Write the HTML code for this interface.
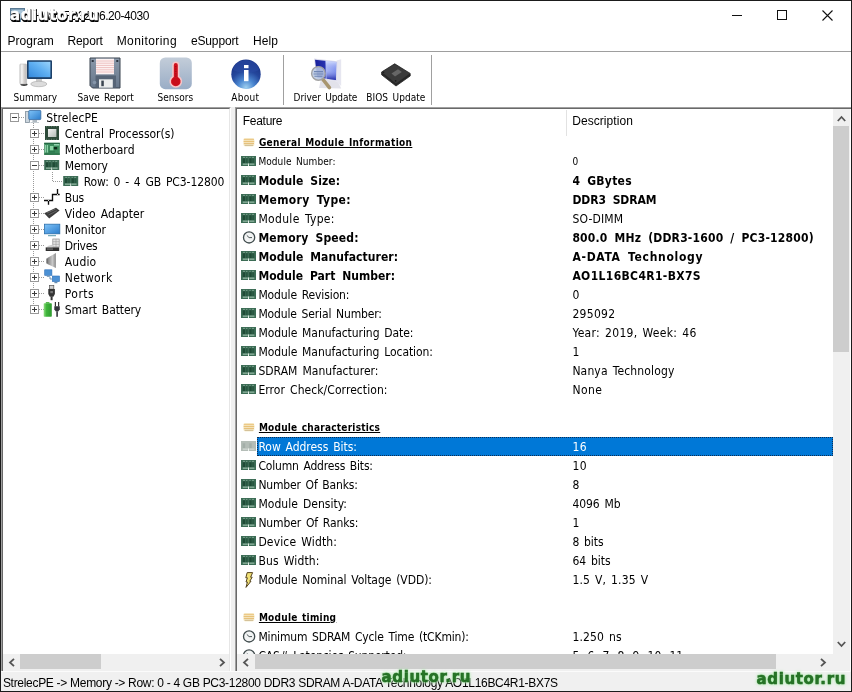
<!DOCTYPE html>
<html lang="en"><head><meta charset="utf-8"><title>HWiNFO32 v6.20-4030</title>
<style>
html,body{margin:0;padding:0;background:#fff;}
body{width:852px;height:692px;position:relative;overflow:hidden;font-family:"Liberation Sans","DejaVu Sans",sans-serif;}
#win{position:absolute;left:0;top:0;width:850px;height:690px;border:1px solid #1b1b1b;background:#fff;}
.abs{position:absolute}
.t{position:absolute;white-space:nowrap;line-height:20px;}
.ic{position:absolute;overflow:visible}
#menuline{left:1px;top:51px;width:850px;height:1px;background:#9e9e9e}
#tsep1,#tsep2{top:55px;width:1px;height:50px;background:#a0a0a0}
#tsep1{left:283px}#tsep2{left:431px}
#lp{left:1px;top:107px;width:230px;height:564px;background:#fff;overflow:hidden}
#lp:before{content:"";position:absolute;left:0;top:0;right:0;bottom:0;border-left:1px solid #a0a0a0;border-top:1px solid #a0a0a0;border-right:1px solid #fff;z-index:3}
#lp:after{content:"";position:absolute;left:1px;top:1px;right:1px;bottom:0;border-left:1px solid #696969;border-top:1px solid #696969;border-right:1px solid #e6e6e6;z-index:3}
#split{left:231px;top:107px;width:4px;height:564px;background:#f0f0f0}
#rp{left:235px;top:107px;width:616px;height:564px;background:#fff;overflow:hidden}
#rp:before{content:"";position:absolute;left:0;top:0;right:0;bottom:0;border-top:1px solid #a0a0a0;border-left:1px solid #a0a0a0;z-index:3}
#rp:after{content:"";position:absolute;left:1px;top:1px;right:0;bottom:0;border-left:1px solid #696969;border-top:1px solid #696969;z-index:3}
#clipL{left:0;top:0;width:230px;height:654px;overflow:hidden}
#clipR{left:0;top:0;width:833px;height:654px;overflow:hidden}
.sb{background:#f0f0f0}
.th{background:#cdcdcd}
#status{left:1px;top:671px;width:850px;height:20px;background:#f0f0f0;border-top:1px solid #fbfbfb;box-sizing:border-box}
#sel{left:257px;top:437px;width:576px;height:19px;background:#0078d7;box-sizing:border-box;border:1px dotted #0d2f55}
.wm{position:absolute;white-space:nowrap;font:bold 15px/20px "DejaVu Sans","Liberation Sans",sans-serif;letter-spacing:0.62px}
.wmg{color:rgba(22,98,22,0.86);-webkit-text-stroke:0.5px rgba(22,98,22,0.86);text-shadow:0 0 2px rgba(130,220,130,0.9),0 0 3px rgba(170,236,170,0.9),0 0 4px rgba(210,248,210,0.9)}
.wmw{color:#fff;-webkit-text-stroke:0.4px #fff;text-shadow:1px 1px 0 #000,1px 2px 0 #000,0 2px 0 #111,0 1px 0 #000}
#root{position:absolute;left:0;top:0;width:852px;height:692px;overflow:hidden;will-change:transform;background:#fff}
</style></head><body><div id="root">
<svg width="0" height="0" style="position:absolute">
<defs>
<symbol id="i-ram" viewBox="0 0 16 19" overflow="visible"><rect x="0" y="4" width="15" height="10" fill="#3c6c55"/><rect x="1.6" y="6.3" width="2.6" height="4.8" fill="#1f4b36"/><rect x="4.9" y="6.3" width="1.8" height="4.8" fill="#285741"/><rect x="8.3" y="6.3" width="2.4" height="4.8" fill="#1f4b36"/><rect x="11.2" y="6.3" width="2" height="4.8" fill="#285741"/><path d="M2 5.4H4M5 5.4H6.4M8.4 5.4H9.6M11 5.4H13" stroke="#86ad98" stroke-width="0.8"/><rect x="1.8" y="11.6" width="5" height="1.1" fill="#9dc0ad"/><rect x="8.4" y="11.6" width="5" height="1.1" fill="#9dc0ad"/><rect x="7" y="11.4" width="1" height="2.6" fill="#e6efe9"/></symbol>
<symbol id="i-ramsel" viewBox="0 0 16 19" overflow="visible"><rect x="0" y="4" width="15" height="10" fill="#b4bdb7"/><rect x="1.6" y="6.3" width="2.6" height="4.8" fill="#a3aea8"/><rect x="8.3" y="6.3" width="2.4" height="4.8" fill="#a3aea8"/><rect x="1.8" y="11.6" width="5" height="1.1" fill="#d4dcd7"/><rect x="8.4" y="11.6" width="5" height="1.1" fill="#d4dcd7"/><rect x="7" y="11.4" width="1" height="2.6" fill="#eef2ef"/></symbol>
<symbol id="i-hd" viewBox="0 0 16 19" overflow="visible"><rect x="2.4" y="0" width="11" height="8.4" rx="2" fill="#f8efd2"/><rect x="2.8" y="0.8" width="10.2" height="1.3" fill="#ecc988"/><rect x="2.6" y="2.8" width="10.6" height="1.4" fill="#e8c27a"/><rect x="2.8" y="4.9" width="10.2" height="1.3" fill="#e6c17c"/><rect x="3.6" y="6.8" width="8.6" height="1" fill="#cdb78c"/></symbol>
<symbol id="i-clk" viewBox="0 0 16 19" overflow="visible"><circle cx="8.1" cy="9.4" r="5.6" fill="#f2f4f4" stroke="#3f4a4c" stroke-width="1.3"/><path d="M8.1 9.6 L5.8 7.4 M8.1 9.6 L11 9.6" stroke="#4a5456" stroke-width="1" fill="none"/></symbol>
<symbol id="i-ltn" viewBox="0 0 16 19" overflow="visible"><path d="M6.2 2.6 L11.6 2.6 L9.6 7.2 L11.2 7.2 L8.8 11.2 L10 11.2 L5 17.4 L6.4 12 L5 12 L6.4 7.8 L4.8 7.8 Z" fill="#f1e176" stroke="#54431f" stroke-width="1" stroke-linejoin="round"/></symbol>
</defs></svg>
<div id="win">
</div>
<!-- title bar -->
<svg class="abs" style="left:10px;top:8px" width="15" height="15" viewBox="0 0 15 15"><rect x="0.5" y="0.5" width="14" height="11" fill="#7fa0b8" stroke="#5a7a94"/><rect x="2" y="2" width="11" height="8" fill="#a8c4d8"/><rect x="4" y="12" width="7" height="2" fill="#6a8aa4"/></svg>
<!-- window controls -->
<svg class="abs" style="left:725px;top:1px" width="126" height="29" viewBox="0 0 126 29" shape-rendering="crispEdges"><rect x="7" y="14" width="10" height="1" fill="#111"/><rect x="52.5" y="9.5" width="9" height="9" fill="none" stroke="#111" stroke-width="1"/><path d="M97.5 9.5 L107.5 19.5 M107.5 9.5 L97.5 19.5" stroke="#111" stroke-width="1.1" shape-rendering="geometricPrecision"/></svg>
<div class="abs" id="menuline"></div>
<div class="abs" id="tsep1"></div><div class="abs" id="tsep2"></div>
<svg class="abs" style="left:0;top:52px" width="440" height="44" viewBox="0 52 440 44">
<defs>
<linearGradient id="gScr" x1="0" y1="1" x2="1" y2="0"><stop offset="0" stop-color="#3388dc"/><stop offset="0.55" stop-color="#60b0f2"/><stop offset="1" stop-color="#9ad4fc"/></linearGradient>
<linearGradient id="gTow" x1="0" y1="0" x2="1" y2="0"><stop offset="0" stop-color="#cfcfcf"/><stop offset="0.3" stop-color="#f6f6f6"/><stop offset="0.6" stop-color="#d6d2d0"/><stop offset="1" stop-color="#b9b9b9"/></linearGradient>
<linearGradient id="gSen" x1="0" y1="0" x2="0" y2="1"><stop offset="0" stop-color="#c3cdd9"/><stop offset="1" stop-color="#9aadc6"/></linearGradient>
<radialGradient id="gAb" cx="0.5" cy="0.95" r="0.8"><stop offset="0" stop-color="#9fd0f0"/><stop offset="0.35" stop-color="#4a86d0"/><stop offset="0.7" stop-color="#24479c"/><stop offset="1" stop-color="#1c378a"/></radialGradient>
<linearGradient id="gFl" x1="0" y1="0" x2="0" y2="1"><stop offset="0" stop-color="#8a98aa"/><stop offset="1" stop-color="#66768a"/></linearGradient>
<linearGradient id="gDs" x1="0" y1="0" x2="1" y2="0"><stop offset="0" stop-color="#18209a"/><stop offset="0.47" stop-color="#2832b0"/><stop offset="0.52" stop-color="#aebcf6"/><stop offset="1" stop-color="#7f92ee"/></linearGradient>
<linearGradient id="gDs2" x1="0" y1="0" x2="0" y2="1"><stop offset="0" stop-color="#dfe8ff" stop-opacity="0.85"/><stop offset="0.5" stop-color="#8a98f0" stop-opacity="0.15"/><stop offset="1" stop-color="#1a22a0" stop-opacity="0.95"/></linearGradient>
</defs>
<!-- Summary -->
<g>
<ellipse cx="24" cy="84.6" rx="3.6" ry="1.3" fill="#3a3a3a"/>
<rect x="19.8" y="64" width="6.8" height="20" rx="0.8" fill="url(#gTow)" stroke="#b4b4b4" stroke-width="0.5"/>
<rect x="36" y="78.5" width="6" height="4" fill="#c9c9c9"/>
<ellipse cx="38.8" cy="84" rx="8" ry="2.7" fill="#dcdcdc" stroke="#b0b0b0" stroke-width="0.7"/>
<rect x="27" y="60.3" width="25" height="18.8" rx="1" fill="#1d4068"/>
<rect x="28.6" y="61.8" width="21.8" height="15.4" fill="url(#gScr)"/>
</g>
<!-- Save Report -->
<g>
<path d="M90 58 H120 V88 H92.5 L90 85.5 Z" fill="url(#gFl)" stroke="#39424e" stroke-width="1"/>
<rect x="96" y="58.7" width="18" height="15.6" fill="#fdf3f3"/>
<path d="M96 61H114M96 63.2H114M96 65.4H114M96 67.6H114M96 69.8H114M96 72H114" stroke="#eec2c2" stroke-width="1"/>
<rect x="95.5" y="75.5" width="20.5" height="12" fill="#566476"/>
<rect x="99" y="79.3" width="13.8" height="8.4" fill="#eceeee"/>
<rect x="101.3" y="80.6" width="2.5" height="5.6" fill="#3c4652"/>
<rect x="91.7" y="60" width="2" height="2" fill="#2c3440"/><rect x="116.3" y="60" width="2" height="2" fill="#2c3440"/>
<circle cx="94.5" cy="82.5" r="1.8" fill="#8696aa"/>
</g>
<!-- Sensors -->
<g>
<rect x="159.8" y="57.4" width="32" height="31.8" rx="5.5" fill="url(#gSen)"/>
<path d="M173 65 a2.8 2.8 0 0 1 5.6 0 V76.6 a5.6 5.6 0 1 1 -5.6 0 Z" fill="#d0121f" stroke="#f6c6c8" stroke-width="1.6"/>
<path d="M175.8 66 V78" stroke="#a00a14" stroke-width="1.2" stroke-dasharray="1.2 1.2"/>
<circle cx="175.8" cy="81.4" r="3.6" fill="#c80d1a"/>
</g>
<!-- About -->
<g>
<circle cx="246" cy="74.2" r="14.7" fill="url(#gAb)"/>
<path d="M232.6 70 a14 14 0 0 1 26.8 0 q-13 6 -26.8 0z" fill="#2b4ca6" opacity="0.55"/>
<rect x="244" y="65" width="4.5" height="3.2" fill="#fff"/><rect x="244" y="70" width="4.5" height="11.2" fill="#fff"/>
</g>
<!-- Driver Update -->
<g>
<path d="M321 79 L338 81.5 L341.2 88.5 L319 88 Z" fill="#e2e2ea"/>
<path d="M336.6 60.4 L341.2 59.2 L341.2 86 L336.2 81.5 Z" fill="#e6e6f0"/>
<path d="M314 58.6 L337.4 61.2 L336.8 81.2 L316.6 78.4 Z" fill="#dcdcec"/>
<path d="M315 59.8 L336.4 62 L335.9 80 L317.4 77.4 Z" fill="url(#gDs)"/>
<path d="M325.6 60.9 L336.4 62 L335.9 80 L326.6 78.7 Z" fill="url(#gDs2)"/>
<path d="M323 79.5 L329.4 87.6" stroke="#a89670" stroke-width="3.6" stroke-linecap="round"/>
<circle cx="318.4" cy="73.4" r="6.8" fill="#b9c8e2" fill-opacity="0.88" stroke="#a2a2a2" stroke-width="1.4"/>
<path d="M314 71.6 H323 M313.6 74 H323.2 M314.4 76.2 H322.4" stroke="#6f86b4" stroke-width="1.1"/>
</g>
<!-- BIOS Update -->
<g>
<path d="M381.6 72 L394.7 63.8 L410.2 73.4 L410.2 76 L396 86 L381.6 74.8 Z" fill="#262626" stroke="#262626" stroke-width="0.8" stroke-linejoin="round"/>
<path d="M381.8 72.1 L394.7 64.2 L409.8 73.5 L396 83.4 Z" fill="#3a3a3a"/>
<path d="M391.5 73.5 L398 69.3 L401.8 72 L395 76.4 Z" fill="#666"/>
<circle cx="383.6" cy="72.3" r="0.8" fill="#1a1a1a"/><circle cx="395.6" cy="80.8" r="0.9" fill="#1a1a1a"/>
</g>
</svg>

<!-- left panel -->
<div class="abs" id="lp"><div class="abs" id="clipL" style="left:-1px;top:-107px;width:229px;height:654px">
<svg class="abs" style="left:0;top:107px" width="232" height="220" viewBox="0 107 232 220">
<defs>
<linearGradient id="tScr" x1="1" y1="1" x2="0" y2="0"><stop offset="0" stop-color="#2b7ccc"/><stop offset="1" stop-color="#80c4f8"/></linearGradient>
<linearGradient id="tCpu" x1="0" y1="0" x2="1" y2="1"><stop offset="0" stop-color="#f4f4f4"/><stop offset="1" stop-color="#b4bcb6"/></linearGradient>
<linearGradient id="tSpk" x1="0" y1="0" x2="1" y2="0"><stop offset="0" stop-color="#7c7c7c"/><stop offset="0.6" stop-color="#c9c9c9"/><stop offset="1" stop-color="#8a8a8a"/></linearGradient>
<linearGradient id="tBat" x1="0" y1="0" x2="1" y2="0"><stop offset="0" stop-color="#8ddc7e"/><stop offset="0.35" stop-color="#3fb53b"/><stop offset="1" stop-color="#2f9a2f"/></linearGradient>
<g id="bx"><rect x="-4" y="-4" width="8" height="8" fill="#fff" stroke="#989898" stroke-width="1"/></g>
</defs>
<g shape-rendering="crispEdges" stroke="#9a9a9a" stroke-width="1" stroke-dasharray="1 1" fill="none">
<path d="M19 117.5 H25"/>
<path d="M33.5 123 V309"/>
<path d="M39 133.5 H44 M39 149.5 H44 M39 165.5 H44 M39 197.5 H44 M39 213.5 H44 M39 229.5 H44 M39 245.5 H44 M39 261.5 H44 M39 277.5 H44 M39 293.5 H44 M39 309.5 H44"/>
<path d="M52.5 172 V181 M53 181.5 H63"/>
</g>
<g shape-rendering="crispEdges">
<use href="#bx" x="14.5" y="117.5"/><path d="M12 117.5 H17" stroke="#3c3c3c" stroke-width="1"/>
<g id="pl"><use href="#bx" x="34.5" y="133.5"/><path d="M32 133.5 H37 M34.5 131 V136" stroke="#3c3c3c" stroke-width="1"/></g>
<use href="#pl" y="16"/>
<use href="#bx" x="34.5" y="165.5"/><path d="M32 165.5 H37" stroke="#3c3c3c" stroke-width="1"/>
<use href="#pl" y="64"/><use href="#pl" y="80"/><use href="#pl" y="96"/><use href="#pl" y="112"/><use href="#pl" y="128"/><use href="#pl" y="144"/><use href="#pl" y="160"/><use href="#pl" y="176"/>
</g>
<!-- root computer -->
<rect x="25.4" y="111.6" width="4.2" height="10.8" fill="#ccd6de" stroke="#7f8e9a" stroke-width="0.8"/>
<rect x="28.8" y="110.4" width="12" height="9.2" rx="0.8" fill="url(#tScr)" stroke="#3b6fa6" stroke-width="0.9"/>
<rect x="32.5" y="120" width="4.5" height="2.2" fill="#aeb8c0"/><rect x="30.5" y="122" width="8.5" height="1" fill="#c4ccd2"/>
<!-- cpu -->
<rect x="45" y="126" width="14" height="14" fill="#2d4a39"/>
<path d="M46.5 126.3V127.2M49 126.3V127.2M51.5 126.3V127.2M54 126.3V127.2M56.5 126.3V127.2M46.5 138.8V139.7M49 138.8V139.7M51.5 138.8V139.7M54 138.8V139.7M56.5 138.8V139.7" stroke="#7e9a88" stroke-width="0.8"/>
<rect x="48" y="129" width="8.4" height="8" fill="url(#tCpu)"/>
<!-- motherboard -->
<rect x="44.2" y="142.8" width="15.6" height="12" fill="#3b8c5d"/><rect x="44.2" y="142.8" width="15.6" height="1.2" fill="#256844"/><rect x="44.2" y="153.4" width="15.6" height="1.4" fill="#2a7048"/>
<rect x="45.2" y="145" width="1" height="7.5" fill="#a4e0bc"/><rect x="47" y="145" width="1" height="7.5" fill="#8fd4aa"/>
<rect x="50" y="146" width="3.4" height="4.4" fill="#8ed6a8"/><rect x="53.8" y="147" width="3.4" height="2.4" fill="#0c2c1a"/>
<rect x="54" y="144.2" width="5" height="1.2" fill="#a8e4c4"/><rect x="49" y="150.8" width="6" height="1.8" fill="#2c7a4e"/>
<!-- memory icons -->
<g id="tram"><rect x="44.2" y="160" width="15" height="10" fill="#3c6c55"/><rect x="45.8" y="162.3" width="2.6" height="4.8" fill="#1f4b36"/><rect x="49.1" y="162.3" width="1.8" height="4.8" fill="#285741"/><rect x="52.5" y="162.3" width="2.4" height="4.8" fill="#1f4b36"/><rect x="55.4" y="162.3" width="2" height="4.8" fill="#285741"/><path d="M46.2 161.4H48.2M49.2 161.4H50.6M52.6 161.4H53.8M55.2 161.4H57.2" stroke="#86ad98" stroke-width="0.8"/><rect x="46" y="167.6" width="5" height="1.1" fill="#9dc0ad"/><rect x="52.6" y="167.6" width="5" height="1.1" fill="#9dc0ad"/><rect x="51.2" y="167.4" width="1" height="2.6" fill="#e6efe9"/></g>
<use href="#tram" x="19" y="16"/>
<!-- bus -->
<path d="M44 200.5 H52.5 V194.5 H59.7 M48.5 200.5 V204.8 M57.5 189 V194.5" fill="none" stroke="#0c0c0c" stroke-width="1.35"/><rect x="48" y="200" width="1" height="1" fill="#ddd"/><rect x="57" y="194" width="1" height="1" fill="#ddd"/>
<!-- video adapter -->
<path d="M44.2 213.2 L56 207.8 L59.6 210.6 L49.2 218.6 Z" fill="#3b3b3b"/>
<path d="M47 213 L55.5 209.2 M48.5 215 L57 210.6" stroke="#6d6d6d" stroke-width="0.8"/>
<!-- monitor -->
<rect x="44.4" y="224.2" width="15.4" height="9.6" fill="url(#tScr)" stroke="#2b6eaa" stroke-width="0.8"/>
<rect x="48" y="235.2" width="8" height="1" fill="#5a98a8"/>
<!-- drives -->
<rect x="52.8" y="239" width="6.4" height="8" fill="#e4e4e4" stroke="#8e8e8e" stroke-width="0.7"/><path d="M52.8 241.7H59.2M52.8 244.3H59.2M56 239V247" stroke="#9a9a9a" stroke-width="0.6"/>
<path d="M47.5 246 L52.8 244.5 V247 H47.5Z" fill="#cfcfcf"/>
<rect x="45.7" y="247.4" width="13.5" height="3.6" fill="#2f2f2f"/><rect x="47" y="248.6" width="6" height="0.9" fill="#8a8a8a"/>
<!-- audio -->
<path d="M47.3 258 L55.9 253 V268 L47.3 264 Z" fill="url(#tSpk)"/><rect x="46.3" y="258.5" width="1.6" height="5" fill="#6e6e6e"/>
<!-- network -->
<rect x="44.7" y="269.8" width="7.2" height="5.6" fill="#4b90d4" stroke="#2f70b8" stroke-width="0.6"/><rect x="46.8" y="275.6" width="3" height="1.2" fill="#6a8fb0"/>
<rect x="52.3" y="276" width="7.2" height="5.6" fill="#4b90d4" stroke="#2f70b8" stroke-width="0.6"/><rect x="54.4" y="281.8" width="3" height="1.4" fill="#6a8fb0"/>
<path d="M50 276.8 V279 H52.3" fill="none" stroke="#5f86ae" stroke-width="0.9"/>
<!-- ports -->
<rect x="49.4" y="285.4" width="4.4" height="3.8" fill="#d0d0d0" stroke="#555" stroke-width="0.7"/>
<path d="M48.3 289 H54.9 V294 L53.4 296.8 H49.8 L48.3 294 Z" fill="#333"/><rect x="50.6" y="296.6" width="2" height="3.6" fill="#333"/><rect x="50.3" y="291" width="2.6" height="2.2" fill="#777"/>
<!-- smart battery -->
<rect x="45.8" y="302" width="3.6" height="1.4" fill="#59b84f"/><rect x="43.7" y="303.2" width="8.1" height="13.6" rx="0.8" fill="url(#tBat)"/>
<path d="M55.4 302 V306.4 M58.6 302 V306.4" stroke="#333" stroke-width="1.2"/><path d="M54.3 306.2 H59.8 V309.6 L58.2 311.6 H55.9 L54.3 309.6 Z" fill="#34343c"/><rect x="56.3" y="311.4" width="1.6" height="5.4" fill="#34343c"/>
</svg>

<span class="t" style="left:228.9px;top:171.65px;font:12px/20px 'DejaVu Sans Condensed','Liberation Sans',sans-serif;color:#000;word-spacing:1.5px;">DDR3 SDRAM A-DATA Technology AO1L16BC4R1-BX7S</span>
<span class="t" style="left:83.7px;top:171.65px;font:12px/20px 'DejaVu Sans Condensed','Liberation Sans',sans-serif;color:#000;word-spacing:1.5px;letter-spacing:-0.085px;">Row: 0 - 4 GB PC3-12800</span>
</div>
<div class="abs sb" style="left:2px;top:547px;width:228px;height:17px"></div>
<div class="abs th" style="left:19px;top:547px;width:81px;height:15px"></div>
<svg class="abs" style="left:7px;top:551px" width="8" height="9" viewBox="0 0 8 9"><path d="M6 0.8 L2 4.5 L6 8.2" fill="none" stroke="#555" stroke-width="1.8"/></svg>
<svg class="abs" style="left:217px;top:551px" width="8" height="9" viewBox="0 0 8 9"><path d="M2 0.8 L6 4.5 L2 8.2" fill="none" stroke="#555" stroke-width="1.8"/></svg>
</div>
<div class="abs" id="split"></div>
<!-- right panel -->
<div class="abs" id="rp"><div class="abs" id="clipR" style="left:-235px;top:-107px;width:833px;height:654px">
<div class="abs" style="left:566px;top:110px;width:1px;height:26px;background:#e2e2e2"></div>
<div class="abs" id="sel"></div>
<svg class="ic" style="left:241px;top:138px" width="16" height="19"><use href="#i-hd"/></svg>
<svg class="ic" style="left:241px;top:152px" width="16" height="19"><use href="#i-ram"/></svg>
<svg class="ic" style="left:241px;top:171px" width="16" height="19"><use href="#i-ram"/></svg>
<svg class="ic" style="left:241px;top:190px" width="16" height="19"><use href="#i-ram"/></svg>
<svg class="ic" style="left:241px;top:209px" width="16" height="19"><use href="#i-ram"/></svg>
<svg class="ic" style="left:241px;top:228px" width="16" height="19"><use href="#i-clk"/></svg>
<svg class="ic" style="left:241px;top:247px" width="16" height="19"><use href="#i-ram"/></svg>
<svg class="ic" style="left:241px;top:266px" width="16" height="19"><use href="#i-ram"/></svg>
<svg class="ic" style="left:241px;top:285px" width="16" height="19"><use href="#i-ram"/></svg>
<svg class="ic" style="left:241px;top:304px" width="16" height="19"><use href="#i-ram"/></svg>
<svg class="ic" style="left:241px;top:323px" width="16" height="19"><use href="#i-ram"/></svg>
<svg class="ic" style="left:241px;top:342px" width="16" height="19"><use href="#i-ram"/></svg>
<svg class="ic" style="left:241px;top:361px" width="16" height="19"><use href="#i-ram"/></svg>
<svg class="ic" style="left:241px;top:380px" width="16" height="19"><use href="#i-ram"/></svg>
<svg class="ic" style="left:241px;top:423px" width="16" height="19"><use href="#i-hd"/></svg>
<svg class="ic" style="left:241px;top:437px" width="16" height="19"><use href="#i-ramsel"/></svg>
<svg class="ic" style="left:241px;top:456px" width="16" height="19"><use href="#i-ram"/></svg>
<svg class="ic" style="left:241px;top:475px" width="16" height="19"><use href="#i-ram"/></svg>
<svg class="ic" style="left:241px;top:494px" width="16" height="19"><use href="#i-ram"/></svg>
<svg class="ic" style="left:241px;top:513px" width="16" height="19"><use href="#i-ram"/></svg>
<svg class="ic" style="left:241px;top:532px" width="16" height="19"><use href="#i-ram"/></svg>
<svg class="ic" style="left:241px;top:551px" width="16" height="19"><use href="#i-ram"/></svg>
<svg class="ic" style="left:241px;top:570px" width="16" height="19"><use href="#i-ltn"/></svg>
<svg class="ic" style="left:241px;top:613px" width="16" height="19"><use href="#i-hd"/></svg>
<svg class="ic" style="left:241px;top:627px" width="16" height="19"><use href="#i-clk"/></svg>
<svg class="ic" style="left:241px;top:646px" width="16" height="19"><use href="#i-clk"/></svg>
<span class="t" style="left:258.9px;top:132.84px;font:bold 10px/20px 'DejaVu Sans Condensed','Liberation Sans',sans-serif;color:#000;word-spacing:1px;letter-spacing:0.335px;text-decoration:underline;">General Module Information</span>
<span class="t" style="left:258.4px;top:151.84px;font:10px/20px 'DejaVu Sans Condensed','Liberation Sans',sans-serif;color:#000;word-spacing:1.5px;letter-spacing:0.079px;">Module Number:</span>
<span class="t" style="left:572.4px;top:151.84px;font:10px/20px 'DejaVu Sans Condensed','Liberation Sans',sans-serif;color:#000;word-spacing:1.5px;letter-spacing:0.000px;">0</span>
<span class="t" style="left:258.4px;top:171.15px;font:bold 12px/20px 'DejaVu Sans Condensed','Liberation Sans',sans-serif;color:#000;word-spacing:3px;letter-spacing:0.076px;">Module Size:</span>
<span class="t" style="left:572.4px;top:171.15px;font:bold 12px/20px 'DejaVu Sans Condensed','Liberation Sans',sans-serif;color:#000;word-spacing:3px;letter-spacing:0.270px;">4 GBytes</span>
<span class="t" style="left:258.4px;top:190.15px;font:bold 12px/20px 'DejaVu Sans Condensed','Liberation Sans',sans-serif;color:#000;word-spacing:3px;letter-spacing:0.353px;">Memory Type:</span>
<span class="t" style="left:572.4px;top:190.15px;font:bold 12px/20px 'DejaVu Sans Condensed','Liberation Sans',sans-serif;color:#000;word-spacing:3px;letter-spacing:-0.052px;">DDR3 SDRAM</span>
<span class="t" style="left:258.4px;top:209.15px;font:12px/20px 'DejaVu Sans Condensed','Liberation Sans',sans-serif;color:#000;word-spacing:1.5px;letter-spacing:0.332px;">Module Type:</span>
<span class="t" style="left:572.4px;top:209.15px;font:12px/20px 'DejaVu Sans Condensed','Liberation Sans',sans-serif;color:#000;word-spacing:1.5px;letter-spacing:0.164px;">SO-DIMM</span>
<span class="t" style="left:258.4px;top:228.15px;font:bold 12px/20px 'DejaVu Sans Condensed','Liberation Sans',sans-serif;color:#000;word-spacing:3px;letter-spacing:0.170px;">Memory Speed:</span>
<span class="t" style="left:572.4px;top:228.15px;font:bold 12px/20px 'DejaVu Sans Condensed','Liberation Sans',sans-serif;color:#000;word-spacing:3px;letter-spacing:0.203px;">800.0 MHz (DDR3-1600 / PC3-12800)</span>
<span class="t" style="left:258.4px;top:247.15px;font:bold 12px/20px 'DejaVu Sans Condensed','Liberation Sans',sans-serif;color:#000;word-spacing:3px;letter-spacing:0.069px;">Module Manufacturer:</span>
<span class="t" style="left:572.4px;top:247.15px;font:bold 12px/20px 'DejaVu Sans Condensed','Liberation Sans',sans-serif;color:#000;word-spacing:3px;letter-spacing:0.703px;">A-DATA Technology</span>
<span class="t" style="left:258.4px;top:266.15px;font:bold 12px/20px 'DejaVu Sans Condensed','Liberation Sans',sans-serif;color:#000;word-spacing:3px;letter-spacing:0.025px;">Module Part Number:</span>
<span class="t" style="left:572.4px;top:266.15px;font:bold 12px/20px 'DejaVu Sans Condensed','Liberation Sans',sans-serif;color:#000;word-spacing:3px;letter-spacing:0.362px;">AO1L16BC4R1-BX7S</span>
<span class="t" style="left:258.4px;top:285.15px;font:12px/20px 'DejaVu Sans Condensed','Liberation Sans',sans-serif;color:#000;word-spacing:1.5px;letter-spacing:-0.120px;">Module Revision:</span>
<span class="t" style="left:572.4px;top:285.15px;font:12px/20px 'DejaVu Sans Condensed','Liberation Sans',sans-serif;color:#000;word-spacing:1.5px;letter-spacing:0.000px;">0</span>
<span class="t" style="left:258.4px;top:304.15px;font:12px/20px 'DejaVu Sans Condensed','Liberation Sans',sans-serif;color:#000;word-spacing:1.5px;letter-spacing:-0.143px;">Module Serial Number:</span>
<span class="t" style="left:572.4px;top:304.15px;font:12px/20px 'DejaVu Sans Condensed','Liberation Sans',sans-serif;color:#000;word-spacing:1.5px;letter-spacing:0.299px;">295092</span>
<span class="t" style="left:258.4px;top:323.15px;font:12px/20px 'DejaVu Sans Condensed','Liberation Sans',sans-serif;color:#000;word-spacing:1.5px;letter-spacing:-0.066px;">Module Manufacturing Date:</span>
<span class="t" style="left:572.4px;top:323.15px;font:12px/20px 'DejaVu Sans Condensed','Liberation Sans',sans-serif;color:#000;word-spacing:1.5px;letter-spacing:0.277px;">Year: 2019, Week: 46</span>
<span class="t" style="left:258.4px;top:342.15px;font:12px/20px 'DejaVu Sans Condensed','Liberation Sans',sans-serif;color:#000;word-spacing:1.5px;letter-spacing:-0.068px;">Module Manufacturing Location:</span>
<span class="t" style="left:572.4px;top:342.15px;font:12px/20px 'DejaVu Sans Condensed','Liberation Sans',sans-serif;color:#000;word-spacing:1.5px;">1</span>
<span class="t" style="left:258.4px;top:361.15px;font:12px/20px 'DejaVu Sans Condensed','Liberation Sans',sans-serif;color:#000;word-spacing:1.5px;letter-spacing:0.032px;">SDRAM Manufacturer:</span>
<span class="t" style="left:572.4px;top:361.15px;font:12px/20px 'DejaVu Sans Condensed','Liberation Sans',sans-serif;color:#000;word-spacing:1.5px;letter-spacing:0.148px;">Nanya Technology</span>
<span class="t" style="left:258.4px;top:380.15px;font:12px/20px 'DejaVu Sans Condensed','Liberation Sans',sans-serif;color:#000;word-spacing:1.5px;letter-spacing:0.073px;">Error Check/Correction:</span>
<span class="t" style="left:572.4px;top:380.15px;font:12px/20px 'DejaVu Sans Condensed','Liberation Sans',sans-serif;color:#000;word-spacing:1.5px;letter-spacing:0.426px;">None</span>
<span class="t" style="left:258.9px;top:417.84px;font:bold 10px/20px 'DejaVu Sans Condensed','Liberation Sans',sans-serif;color:#000;word-spacing:1px;letter-spacing:0.228px;text-decoration:underline;">Module characteristics</span>
<span class="t" style="left:258.4px;top:437.15px;font:12px/20px 'DejaVu Sans Condensed','Liberation Sans',sans-serif;color:#fff;word-spacing:1.5px;letter-spacing:-0.032px;">Row Address Bits:</span>
<span class="t" style="left:572.4px;top:437.15px;font:12px/20px 'DejaVu Sans Condensed','Liberation Sans',sans-serif;color:#fff;word-spacing:1.5px;letter-spacing:0.466px;">16</span>
<span class="t" style="left:258.4px;top:456.15px;font:12px/20px 'DejaVu Sans Condensed','Liberation Sans',sans-serif;color:#000;word-spacing:1.5px;letter-spacing:-0.182px;">Column Address Bits:</span>
<span class="t" style="left:572.4px;top:456.15px;font:12px/20px 'DejaVu Sans Condensed','Liberation Sans',sans-serif;color:#000;word-spacing:1.5px;letter-spacing:0.466px;">10</span>
<span class="t" style="left:258.4px;top:475.15px;font:12px/20px 'DejaVu Sans Condensed','Liberation Sans',sans-serif;color:#000;word-spacing:1.5px;letter-spacing:-0.154px;">Number Of Banks:</span>
<span class="t" style="left:572.4px;top:475.15px;font:12px/20px 'DejaVu Sans Condensed','Liberation Sans',sans-serif;color:#000;word-spacing:1.5px;letter-spacing:0.000px;">8</span>
<span class="t" style="left:258.4px;top:494.15px;font:12px/20px 'DejaVu Sans Condensed','Liberation Sans',sans-serif;color:#000;word-spacing:1.5px;letter-spacing:0.042px;">Module Density:</span>
<span class="t" style="left:572.4px;top:494.15px;font:12px/20px 'DejaVu Sans Condensed','Liberation Sans',sans-serif;color:#000;word-spacing:1.5px;letter-spacing:-0.063px;">4096 Mb</span>
<span class="t" style="left:258.4px;top:513.15px;font:12px/20px 'DejaVu Sans Condensed','Liberation Sans',sans-serif;color:#000;word-spacing:1.5px;letter-spacing:-0.109px;">Number Of Ranks:</span>
<span class="t" style="left:572.4px;top:513.15px;font:12px/20px 'DejaVu Sans Condensed','Liberation Sans',sans-serif;color:#000;word-spacing:1.5px;">1</span>
<span class="t" style="left:258.4px;top:532.15px;font:12px/20px 'DejaVu Sans Condensed','Liberation Sans',sans-serif;color:#000;word-spacing:1.5px;letter-spacing:0.146px;">Device Width:</span>
<span class="t" style="left:572.4px;top:532.15px;font:12px/20px 'DejaVu Sans Condensed','Liberation Sans',sans-serif;color:#000;word-spacing:1.5px;letter-spacing:-0.063px;">8 bits</span>
<span class="t" style="left:258.4px;top:551.15px;font:12px/20px 'DejaVu Sans Condensed','Liberation Sans',sans-serif;color:#000;word-spacing:1.5px;letter-spacing:0.145px;">Bus Width:</span>
<span class="t" style="left:572.4px;top:551.15px;font:12px/20px 'DejaVu Sans Condensed','Liberation Sans',sans-serif;color:#000;word-spacing:1.5px;letter-spacing:-0.029px;">64 bits</span>
<span class="t" style="left:258.4px;top:570.15px;font:12px/20px 'DejaVu Sans Condensed','Liberation Sans',sans-serif;color:#000;word-spacing:1.5px;letter-spacing:-0.057px;">Module Nominal Voltage (VDD):</span>
<span class="t" style="left:572.4px;top:570.15px;font:12px/20px 'DejaVu Sans Condensed','Liberation Sans',sans-serif;color:#000;word-spacing:1.5px;letter-spacing:0.127px;">1.5 V, 1.35 V</span>
<span class="t" style="left:258.9px;top:607.84px;font:bold 10px/20px 'DejaVu Sans Condensed','Liberation Sans',sans-serif;color:#000;word-spacing:1px;letter-spacing:0.260px;text-decoration:underline;">Module timing</span>
<span class="t" style="left:258.4px;top:627.15px;font:12px/20px 'DejaVu Sans Condensed','Liberation Sans',sans-serif;color:#000;word-spacing:1.5px;letter-spacing:-0.158px;">Minimum SDRAM Cycle Time (tCKmin):</span>
<span class="t" style="left:572.4px;top:627.15px;font:12px/20px 'DejaVu Sans Condensed','Liberation Sans',sans-serif;color:#000;word-spacing:1.5px;letter-spacing:0.129px;">1.250 ns</span>
<span class="t" style="left:258.4px;top:646.15px;font:12px/20px 'DejaVu Sans Condensed','Liberation Sans',sans-serif;color:#000;word-spacing:1.5px;letter-spacing:-0.165px;">CAS# Latencies Supported:</span>
<span class="t" style="left:572.4px;top:646.15px;font:12px/20px 'DejaVu Sans Condensed','Liberation Sans',sans-serif;color:#000;word-spacing:1.5px;letter-spacing:-0.062px;">5, 6, 7, 8, 9, 10, 11</span>
</div>
<!-- v scroll -->
<div class="abs sb" style="left:598px;top:2px;width:17px;height:562px"></div>
<div class="abs th" style="left:598px;top:19px;width:16px;height:226px"></div>
<svg class="abs" style="left:602px;top:8px" width="9" height="8" viewBox="0 0 9 8"><path d="M0.8 6 L4.5 2 L8.2 6" fill="none" stroke="#555" stroke-width="1.8"/></svg>
<svg class="abs" style="left:602px;top:533px" width="9" height="8" viewBox="0 0 9 8"><path d="M0.8 2 L4.5 6 L8.2 2" fill="none" stroke="#555" stroke-width="1.8"/></svg>
<!-- h scroll -->
<div class="abs sb" style="left:2px;top:547px;width:596px;height:17px"></div>
<div class="abs th" style="left:20px;top:547px;width:521px;height:15px"></div>
<svg class="abs" style="left:7px;top:551px" width="8" height="9" viewBox="0 0 8 9"><path d="M6 0.8 L2 4.5 L6 8.2" fill="none" stroke="#555" stroke-width="1.8"/></svg>
<svg class="abs" style="left:584px;top:551px" width="8" height="9" viewBox="0 0 8 9"><path d="M2 0.8 L6 4.5 L2 8.2" fill="none" stroke="#555" stroke-width="1.8"/></svg>
</div>
<div class="abs" id="status"></div>
<span class="t" style="left:32.7px;top:6.15px;font:12px/20px 'Liberation Sans','DejaVu Sans',sans-serif;color:#000;letter-spacing:-0.445px;">HWiNFO32 v6.20-4030</span>
<span class="t" style="left:7.5px;top:31.05px;font:12px/20px 'Liberation Sans','DejaVu Sans',sans-serif;color:#000;letter-spacing:0.031px;">Program</span>
<span class="t" style="left:67.5px;top:31.05px;font:12px/20px 'Liberation Sans','DejaVu Sans',sans-serif;color:#000;letter-spacing:-0.126px;">Report</span>
<span class="t" style="left:116.7px;top:31.05px;font:12px/20px 'Liberation Sans','DejaVu Sans',sans-serif;color:#000;letter-spacing:0.435px;">Monitoring</span>
<span class="t" style="left:190.95px;top:31.05px;font:12px/20px 'Liberation Sans','DejaVu Sans',sans-serif;color:#000;letter-spacing:-0.143px;">eSupport</span>
<span class="t" style="left:252.95px;top:31.05px;font:12px/20px 'Liberation Sans','DejaVu Sans',sans-serif;color:#000;letter-spacing:0.087px;">Help</span>
<span class="t" style="left:13.4px;top:87.84px;font:10px/20px 'DejaVu Sans Condensed','Liberation Sans',sans-serif;color:#000;word-spacing:1.5px;letter-spacing:0.036px;">Summary</span>
<span class="t" style="left:77.5px;top:87.84px;font:10px/20px 'DejaVu Sans Condensed','Liberation Sans',sans-serif;color:#000;word-spacing:1.5px;letter-spacing:-0.002px;">Save Report</span>
<span class="t" style="left:157.5px;top:87.84px;font:10px/20px 'DejaVu Sans Condensed','Liberation Sans',sans-serif;color:#000;word-spacing:1.5px;letter-spacing:0.028px;">Sensors</span>
<span class="t" style="left:231.2px;top:87.84px;font:10px/20px 'DejaVu Sans Condensed','Liberation Sans',sans-serif;color:#000;word-spacing:1.5px;letter-spacing:0.323px;">About</span>
<span class="t" style="left:293.6px;top:87.84px;font:10px/20px 'DejaVu Sans Condensed','Liberation Sans',sans-serif;color:#000;word-spacing:1.5px;letter-spacing:-0.069px;">Driver Update</span>
<span class="t" style="left:366.2px;top:87.84px;font:10px/20px 'DejaVu Sans Condensed','Liberation Sans',sans-serif;color:#000;word-spacing:1.5px;letter-spacing:0.064px;">BIOS Update</span>
<span class="t" style="left:46.2px;top:107.65px;font:12px/20px 'DejaVu Sans Condensed','Liberation Sans',sans-serif;color:#000;word-spacing:1.5px;letter-spacing:0.111px;">StrelecPE</span>
<span class="t" style="left:64.8px;top:123.65px;font:12px/20px 'DejaVu Sans Condensed','Liberation Sans',sans-serif;color:#000;word-spacing:1.5px;letter-spacing:-0.028px;">Central Processor(s)</span>
<span class="t" style="left:64.8px;top:139.65px;font:12px/20px 'DejaVu Sans Condensed','Liberation Sans',sans-serif;color:#000;word-spacing:1.5px;letter-spacing:0.047px;">Motherboard</span>
<span class="t" style="left:64.8px;top:155.65px;font:12px/20px 'DejaVu Sans Condensed','Liberation Sans',sans-serif;color:#000;word-spacing:1.5px;letter-spacing:-0.141px;">Memory</span>
<span class="t" style="left:64.8px;top:187.65px;font:12px/20px 'DejaVu Sans Condensed','Liberation Sans',sans-serif;color:#000;word-spacing:1.5px;letter-spacing:-0.238px;">Bus</span>
<span class="t" style="left:64.8px;top:203.65px;font:12px/20px 'DejaVu Sans Condensed','Liberation Sans',sans-serif;color:#000;word-spacing:1.5px;letter-spacing:0.119px;">Video Adapter</span>
<span class="t" style="left:64.8px;top:219.65px;font:12px/20px 'DejaVu Sans Condensed','Liberation Sans',sans-serif;color:#000;word-spacing:1.5px;letter-spacing:0.026px;">Monitor</span>
<span class="t" style="left:64.8px;top:235.65px;font:12px/20px 'DejaVu Sans Condensed','Liberation Sans',sans-serif;color:#000;word-spacing:1.5px;letter-spacing:-0.321px;">Drives</span>
<span class="t" style="left:64.8px;top:251.65px;font:12px/20px 'DejaVu Sans Condensed','Liberation Sans',sans-serif;color:#000;word-spacing:1.5px;letter-spacing:0.178px;">Audio</span>
<span class="t" style="left:64.8px;top:267.65px;font:12px/20px 'DejaVu Sans Condensed','Liberation Sans',sans-serif;color:#000;word-spacing:1.5px;letter-spacing:0.387px;">Network</span>
<span class="t" style="left:64.8px;top:283.65px;font:12px/20px 'DejaVu Sans Condensed','Liberation Sans',sans-serif;color:#000;word-spacing:1.5px;letter-spacing:0.454px;">Ports</span>
<span class="t" style="left:64.8px;top:299.65px;font:12px/20px 'DejaVu Sans Condensed','Liberation Sans',sans-serif;color:#000;word-spacing:1.5px;letter-spacing:-0.094px;">Smart Battery</span>
<span class="t" style="left:242.8px;top:111.15px;font:12px/20px 'Liberation Sans','DejaVu Sans',sans-serif;color:#000;letter-spacing:-0.293px;">Feature</span>
<span class="t" style="left:572.2px;top:111.15px;font:12px/20px 'Liberation Sans','DejaVu Sans',sans-serif;color:#000;letter-spacing:0.067px;">Description</span>
<span class="t" style="left:2.9px;top:673.15px;font:12px/20px 'Liberation Sans','DejaVu Sans',sans-serif;color:#000;letter-spacing:-0.297px;">StrelecPE -&gt; Memory -&gt; Row: 0 - 4 GB PC3-12800 DDR3 SDRAM A-DATA Technology AO1L16BC4R1-BX7S</span>
<!-- watermarks -->
<span class="wm wmw" style="left:10px;top:4.6px">adiutor.ru</span>
<span class="wm wmg" style="left:381.6px;top:666.6px">adiutor.ru</span>
<span class="wm wmg" style="left:756.6px;top:669px">adiutor.ru</span>
<div class="abs" style="left:0;top:0;width:850px;height:690px;border:1px solid #1b1b1b;pointer-events:none"></div>
</div></body></html>
